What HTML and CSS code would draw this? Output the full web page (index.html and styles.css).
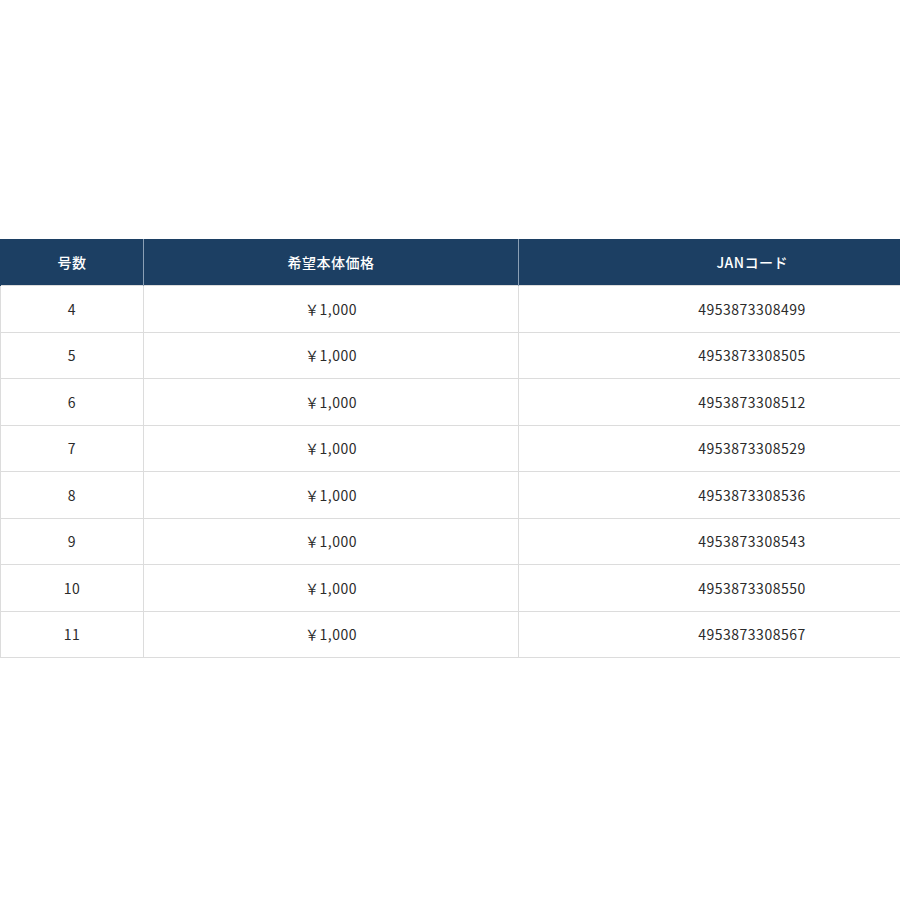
FILE: index.html
```html
<!DOCTYPE html>
<html lang="ja">
<head>
<meta charset="utf-8">
<link rel="stylesheet" href="styles.css">
</head>
<body>
<div class="wrap">
<table class="spec">
<colgroup><col class="c1"><col class="c2"><col class="c3"></colgroup>
<thead>
<tr><th>号数</th><th>希望本体価格</th><th>JANコード</th></tr>
</thead>
<tbody>
<tr><td>4</td><td>￥1,000</td><td>4953873308499</td></tr>
<tr><td>5</td><td>￥1,000</td><td>4953873308505</td></tr>
<tr><td>6</td><td>￥1,000</td><td>4953873308512</td></tr>
<tr><td>7</td><td>￥1,000</td><td>4953873308529</td></tr>
<tr><td>8</td><td>￥1,000</td><td>4953873308536</td></tr>
<tr><td>9</td><td>￥1,000</td><td>4953873308543</td></tr>
<tr><td>10</td><td>￥1,000</td><td>4953873308550</td></tr>
<tr><td>11</td><td>￥1,000</td><td>4953873308567</td></tr>
</tbody>
</table>
</div>
</body>
</html>
```
FILE: styles.css
```css
html, body {
  margin: 0;
  padding: 0;
  background: #fff;
}
body {
  width: 900px;
  height: 900px;
  overflow: hidden;
  font-family: "Noto Sans CJK JP", "Noto Sans", sans-serif;
}
.wrap {
  padding-top: 239px;
  width: 900px;
  overflow: hidden;
}
.spec {
  width: 985px;
  table-layout: fixed;
  border-collapse: collapse;
  font-size: 14px;
  color: #2b2b2b;
}
.c1 { width: 143px; }
.c2 { width: 375px; }
.c3 { width: 467px; }
.spec th {
  background: #1c3f63;
  color: #fff;
  font-weight: 500;
  height: 46px;
  padding: 0;
  text-align: center;
  border-left: 1px solid #8a9fb5;
  letter-spacing: 0.5px;
}
.spec th:first-child { border-left: 1px solid #1c3f63; }
.spec td {
  height: 45.5px;
  padding: 0;
  text-align: center;
  border: 1px solid #dcdcdc;
  letter-spacing: 0.5px;
}
```
